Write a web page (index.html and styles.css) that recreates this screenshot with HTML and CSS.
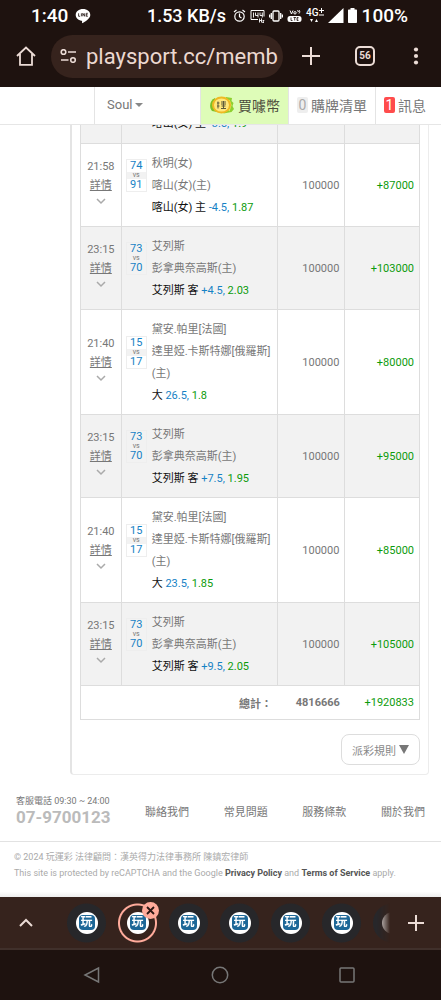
FILE: index.html
```
<!DOCTYPE html>
<html lang="zh-Hant">
<head>
    <meta charset="UTF-8">
    <meta name="viewport" content="width=device-width, initial-scale=1.0">
    <title>玩運彩</title>
    <link rel="stylesheet" href="styles.css">
</head>
<body>
    <div class="status-bar">
        <span class="clock">1:40</span>
        <svg class="line-icon" width="16" height="16" viewBox="0 0 16 16">
            <path d="M8 1C3.900 1 .7 3.600.7 6.900c0 2.900 2.500 5.300 5.900 5.800.7.1.6.6.4 2.200 0 .3.200.4.5.200 1.600-.9 7.800-4.400 7.800-8.200C15.300 3.600 12.100 1 8 1z" fill="#fff"/>
            <path d="M3.600 5.300v3h1.500M6.400 5.300v3M7.800 8.300v-3l1.900 3v-3M12.800 5.300h-1.500v3h1.500M11.300 6.800h1.300" fill="none" stroke="#1e120f" stroke-width=".8"/>
        </svg>
        <span class="speed">1.53 KB/s</span>
        <div class="status-icons">
            <svg width="13" height="14" viewBox="0 0 13 14" fill="none" stroke="#fff" stroke-width="1.200">
                <circle cx="6.500" cy="7.500" r="4.700"/><path d="M6.500 4.500v3.200l2 1.200M1 3l2.500-2M12 3L9.500 1"/>
            </svg>
            <svg width="15" height="14" viewBox="0 0 15 14" fill="none" stroke="#fff">
                <path d="M8 10.500H1v-9h13v6"/><path d="M3.500 3.500v5M5.500 3.500v3h2.500M8 3.500v5M10 3.500v3h2.500M12.300 3.500v5M9.500 9.500v4M9.500 11.500h2M11.500 9.500v4M12.500 11.500h1.500l-1.500 2h1.500" stroke-width=".9"/>
            </svg>
            <svg width="14" height="14" viewBox="0 0 14 14" fill="none" stroke="#fff" stroke-width="1.300">
                <rect x="4" y="2" width="6" height="10" rx="1"/><path d="M2.300 4v6M11.700 4v6M.6 5.500v3M13.400 5.500v3"/>
            </svg>
            <svg width="15" height="14" viewBox="0 0 15 14">
                <path d="M3 1.500l1.500 3.500L6 1.500M10 2c1-.8 2 .2 1 1.200M12 1c1 1 1 2.500 0 3.500" fill="none" stroke="#fff"/>
                <circle cx="8" cy="3.800" r="1.200" fill="none" stroke="#fff"/>
                <rect x=".5" y="7" width="14" height="6" rx="2.500" fill="#fff"/>
                <path d="M4 8.500v3h1.500M6.500 8.500h2.500M7.700 8.500v3M11.500 8.500H10v3h1.500M10 10h1.300" fill="none" stroke="#1e120f" stroke-width=".8"/>
            </svg>
            <span class="network">4G<svg width="5" height="9" viewBox="0 0 5 9" stroke="#fff"><path d="M0 2.500h5M2.500 0v5M0 7h5"/></svg><svg class="arrows" width="8" height="3" viewBox="0 0 8 3" fill="#fff"><path d="M0 0h3L1.500 3zM5 3h3L6.500 0z"/></svg></span>
            <svg width="16" height="15" viewBox="0 0 16 15" fill="#fff"><path d="M15.500 0v15H0z"/></svg>
            <svg class="battery" width="9" height="15" viewBox="0 0 9 15" fill="#fff"><path d="M2.500 0h4v1.500H8c.6 0 1 .4 1 1V14c0 .6-.4 1-1 1H1c-.6 0-1-.4-1-1V2.500c0-.6.4-1 1-1h1.500z"/></svg>
        </div>
        <span>100%</span>
    </div>

    <div class="browser-bar">
        <button class="icon-btn" aria-label="首頁">
            <svg width="20" height="20" viewBox="0 0 20 20" fill="none" stroke="#ecdcd6" stroke-width="1.800"><path d="M1 10L10 1.500 19 10M4 8v10.800h12V8"/></svg>
        </button>
        <div class="url-box">
            <svg width="17" height="14" viewBox="0 0 17 14" fill="none" stroke="#ecdcd6" stroke-width="1.600"><circle cx="3.500" cy="3" r="2.300"/><path d="M8 3h8M1 11h7.500"/><circle cx="13" cy="11" r="2.300"/></svg>
            <input type="text" aria-label="網址" value="playsport.cc/memb">
        </div>
        <button class="icon-btn" aria-label="新分頁">
            <svg width="18" height="18" viewBox="0 0 18 18" stroke="#ecdcd6" stroke-width="2"><path d="M9 0v18M0 9h18"/></svg>
        </button>
        <button class="tab-count">56</button>
        <button class="icon-btn" aria-label="選單">
            <svg width="6" height="18" viewBox="0 0 6 18" fill="#ecdcd6"><circle cx="3" cy="2.500" r="2.100"/><circle cx="3" cy="9" r="2.100"/><circle cx="3" cy="15.500" r="2.100"/></svg>
        </button>
    </div>

    <nav class="site-nav">
        <button class="user-menu">Soul <span class="caret"></span></button>
        <a class="buy" href="#">
            <svg width="26" height="20" viewBox="0 0 26 20">
                <path d="M6 3C1 5-.5 12 3 16l5 1z" fill="#7cc026"/>
                <path d="M17 2l6 1-.5 3 2 2-1 3 1.500 3-2.500 3-8 1.500z" fill="#8ed02f"/>
                <path d="M20 5l2 5-2 6" fill="none" stroke="#d9ef6a" stroke-width="1.200"/>
                <ellipse cx="12.500" cy="10" rx="9.500" ry="8.500" fill="#efb924"/>
                <ellipse cx="12.500" cy="10" rx="7.500" ry="6.600" fill="#ffe77d"/>
                <path d="M9 6.500v7M8 8h2.500M8 11h2.500M12 7h5M12 9h5M12.500 11h4M14.500 6v8M12 13.500h5" stroke="#5d5a3c" stroke-width="1" fill="none"/>
            </svg>
            買噱幣
        </a>
        <a href="#"><span class="badge">0</span>購牌清單</a>
        <a href="#"><span class="badge alert">1</span>訊息</a>
    </nav>

    <main class="page">
        <section class="panel">
            <table class="bets">
                <colgroup>
                    <col class="col-time"><col class="col-match"><col class="col-stake"><col class="col-win">
                </colgroup>
                <tbody>
                    <tr class="shade">
                        <td></td>
                        <td><div class="match"><div class="score blank"></div><div class="teams"><p class="pick">喀山(女) 主 <i>-3.5,</i> <b>1.9</b></p></div></div></td>
                        <td></td>
                        <td></td>
                    </tr>
                    <tr>
                        <td class="time">21:58<a href="#">詳情</a><svg width="10" height="10" viewBox="0 0 10 10"><path d="M1 3l4 4 4-4"/></svg></td>
                        <td><div class="match"><div class="score"><span>74</span><small>vs</small><span>91</span></div><div class="teams"><p>秋明(女)</p><p>喀山(女)(主)</p><p class="pick">喀山(女) 主 <i>-4.5,</i> <b>1.87</b></p></div></div></td>
                        <td class="num">100000</td>
                        <td class="num win">+87000</td>
                    </tr>
                    <tr class="shade">
                        <td class="time">23:15<a href="#">詳情</a><svg width="10" height="10" viewBox="0 0 10 10"><path d="M1 3l4 4 4-4"/></svg></td>
                        <td><div class="match"><div class="score"><span>73</span><small>vs</small><span>70</span></div><div class="teams"><p>艾列斯</p><p>彭拿典奈高斯(主)</p><p class="pick">艾列斯 客 <i>+4.5,</i> <b>2.03</b></p></div></div></td>
                        <td class="num">100000</td>
                        <td class="num win">+103000</td>
                    </tr>
                    <tr>
                        <td class="time">21:40<a href="#">詳情</a><svg width="10" height="10" viewBox="0 0 10 10"><path d="M1 3l4 4 4-4"/></svg></td>
                        <td><div class="match"><div class="score"><span>15</span><small>vs</small><span>17</span></div><div class="teams"><p>黛安.帕里[法國]</p><p>達里婭.卡斯特娜[俄羅斯](主)</p><p class="pick">大 <i>26.5,</i> <b>1.8</b></p></div></div></td>
                        <td class="num">100000</td>
                        <td class="num win">+80000</td>
                    </tr>
                    <tr class="shade">
                        <td class="time">23:15<a href="#">詳情</a><svg width="10" height="10" viewBox="0 0 10 10"><path d="M1 3l4 4 4-4"/></svg></td>
                        <td><div class="match"><div class="score"><span>73</span><small>vs</small><span>70</span></div><div class="teams"><p>艾列斯</p><p>彭拿典奈高斯(主)</p><p class="pick">艾列斯 客 <i>+7.5,</i> <b>1.95</b></p></div></div></td>
                        <td class="num">100000</td>
                        <td class="num win">+95000</td>
                    </tr>
                    <tr>
                        <td class="time">21:40<a href="#">詳情</a><svg width="10" height="10" viewBox="0 0 10 10"><path d="M1 3l4 4 4-4"/></svg></td>
                        <td><div class="match"><div class="score"><span>15</span><small>vs</small><span>17</span></div><div class="teams"><p>黛安.帕里[法國]</p><p>達里婭.卡斯特娜[俄羅斯](主)</p><p class="pick">大 <i>23.5,</i> <b>1.85</b></p></div></div></td>
                        <td class="num">100000</td>
                        <td class="num win">+85000</td>
                    </tr>
                    <tr class="shade">
                        <td class="time">23:15<a href="#">詳情</a><svg width="10" height="10" viewBox="0 0 10 10"><path d="M1 3l4 4 4-4"/></svg></td>
                        <td><div class="match"><div class="score"><span>73</span><small>vs</small><span>70</span></div><div class="teams"><p>艾列斯</p><p>彭拿典奈高斯(主)</p><p class="pick">艾列斯 客 <i>+9.5,</i> <b>2.05</b></p></div></div></td>
                        <td class="num">100000</td>
                        <td class="num win">+105000</td>
                    </tr>
                    <tr class="total">
                        <th colspan="2" scope="row">總計：</th>
                        <td class="num">4816666</td>
                        <td class="num win">+1920833</td>
                    </tr>
                </tbody>
            </table>
            <button class="rules">派彩規則 <svg width="10" height="9" viewBox="0 0 10 9"><path d="M0 0h10L5 9z" fill="#777"/></svg></button>
        </section>

        <footer class="footer">
            <div class="footer-links">
                <div class="service">
                    <span>客服電話 09:30 ~ 24:00</span>
                    <strong>07-9700123</strong>
                </div>
                <a href="#">聯絡我們</a>
                <a href="#">常見問題</a>
                <a href="#">服務條款</a>
                <a href="#">關於我們</a>
            </div>
            <div class="legal">
                <p>© 2024 玩運彩 法律顧問：漢英得力法律事務所 陳鎮宏律師</p>
                <p>This site is protected by reCAPTCHA and the Google <a href="#">Privacy Policy</a> and <a href="#">Terms of Service</a> apply.</p>
            </div>
        </footer>
    </main>

    <div class="tab-strip">
        <button class="icon-btn" aria-label="展開">
            <svg width="14" height="9" viewBox="0 0 14 9" fill="none" stroke="#ecdcd6" stroke-width="2"><path d="M1 8l6-6 6 6"/></svg>
        </button>
        <div class="tabs">
            <button class="tab"><span class="logo"><span>玩</span></span></button>
            <button class="tab active"><span class="logo"><span>玩</span></span>
                <svg class="close" width="17" height="17" viewBox="0 0 17 17"><circle cx="8.500" cy="8.500" r="8.500" fill="#ffab9b"/><path d="M5 5l7 7M12 5l-7 7" stroke="#2a1512" stroke-width="1.800"/></svg>
            </button>
            <button class="tab"><span class="logo"><span>玩</span></span></button>
            <button class="tab"><span class="logo"><span>玩</span></span></button>
            <button class="tab"><span class="logo"><span>玩</span></span></button>
            <button class="tab"><span class="logo"><span>玩</span></span></button>
            <button class="tab" aria-label="分頁"><span class="logo"></span></button>
        </div>
        <button class="icon-btn" aria-label="新增分頁">
            <svg width="16" height="16" viewBox="0 0 16 16" stroke="#ecdcd6" stroke-width="2"><path d="M8 0v16M0 8h16"/></svg>
        </button>
    </div>

    <div class="system-nav">
        <button class="icon-btn" aria-label="返回"><svg width="18" height="18" viewBox="0 0 18 18"><path d="M15.500 2v14L2 9z"/></svg></button>
        <button class="icon-btn" aria-label="主畫面"><svg width="18" height="18" viewBox="0 0 18 18"><circle cx="9" cy="9" r="7.700"/></svg></button>
        <button class="icon-btn" aria-label="最近使用"><svg width="18" height="18" viewBox="0 0 18 18"><rect x="2" y="2" width="14" height="14" rx="1"/></svg></button>
    </div>
</body>
</html>
```
FILE: styles.css
```
* {
    box-sizing: border-box;
}

body {
    display: flex;
    flex-direction: column;
    height: 100vh;
    margin: 0;
    background: #fff;
    color: #777;
    font-family: Roboto, "Noto Sans CJK TC", sans-serif;
    font-size: 11px;
}

button {
    margin: 0;
    padding: 0;
    border: none;
    background: none;
    color: inherit;
    font: inherit;
}

a {
    color: inherit;
    text-decoration: none;
}

p {
    margin: 0;
}

svg {
    display: block;
    flex: none;
}

.icon-btn {
    display: flex;
    align-items: center;
    justify-content: center;
}

/* phone status bar */
.status-bar {
    display: flex;
    align-items: center;
    height: 31px;
    padding: 0 33px 0 31px;
    background: #1e120f;
    color: #fff;
    font-size: 19px;
    font-weight: 500;
}

.line-icon {
    margin-left: 7px;
}

.speed {
    margin-left: auto;
    font-size: 18px;
}

.status-icons {
    display: flex;
    align-items: center;
    gap: 4px;
    margin: 0 5px 0 7px;
}

.network {
    position: relative;
    display: flex;
    height: 15px;
    font-size: 10px;
    line-height: 10px;
}

.network .arrows {
    position: absolute;
    left: 4px;
    bottom: 1px;
}

/* browser toolbar */
.browser-bar {
    display: flex;
    align-items: center;
    height: 56px;
    padding: 0 22px 6px 16px;
    background: #1e120f;
}

.url-box {
    display: flex;
    align-items: center;
    flex: 1;
    gap: 9px;
    min-width: 0;
    height: 43px;
    margin: 0 19px 0 15px;
    padding: 0 4px 0 9px;
    border-radius: 22px;
    background: #36231d;
}

.url-box input {
    flex: 1;
    min-width: 0;
    padding: 0;
    border: none;
    outline: none;
    background: none;
    color: #ecd8d0;
    font-family: Roboto, sans-serif;
    font-size: 22px;
}

.tab-count {
    flex: none;
    width: 20px;
    height: 20px;
    margin: 0 38px 0 35px;
    border: 2px solid #ecdcd6;
    border-radius: 5px;
    color: #ecdcd6;
    font-size: 10px;
    font-weight: 700;
    line-height: 16px;
}

/* site header */
.site-nav {
    display: flex;
    justify-content: flex-end;
    height: 38px;
    border-bottom: 1px solid #e6e6e6;
    color: #777;
    font-size: 14px;
}

.site-nav > * {
    display: flex;
    align-items: center;
    gap: 3px;
    padding: 0 8px 2px;
    border-left: 1px solid #e4e4e4;
}

.site-nav > :last-child {
    padding-right: 15px;
}

.site-nav .user-menu {
    width: 106px;
    padding-left: 12px;
    font-size: 13px;
}

.caret {
    border: 4px solid transparent;
    border-top-color: #888;
    border-bottom: none;
}

.site-nav .buy {
    background: #defcb8;
    color: #4c4c3c;
}

.badge {
    width: 11px;
    border-radius: 2px;
    background: #eee;
    color: #aaa;
    line-height: 16px;
    text-align: center;
}

.badge.alert {
    background: #ff4c4c;
    color: #fff;
}

/* the page is scrolled to its end */
.page {
    display: flex;
    flex: 1;
    flex-direction: column;
    justify-content: flex-end;
    min-height: 0;
    overflow: hidden;
}

.panel {
    display: flex;
    flex-direction: column;
    align-items: flex-end;
    margin: 0 12px 0 70px;
    padding: 0 8px 9px;
    border: 1px solid #ececec;
    border-left: 2px solid #e4e4e4;
    border-radius: 4px;
}

.bets {
    width: 100%;
    table-layout: fixed;
    border-collapse: collapse;
}

.col-time { width: 12%; }
.col-match { width: 46%; }
.col-stake { width: 20%; }
.col-win { width: 22%; }

.bets td,
.bets th {
    padding: 9px 5px 7px;
    border: 1px solid #ddd;
}

.shade {
    background: #f2f2f2;
}

.bets .time {
    padding: 0;
    line-height: 18px;
    text-align: center;
}

.time a {
    display: block;
    line-height: 20px;
    text-decoration: underline;
}

.time svg {
    margin: 0 auto 6px;
    fill: none;
    stroke: #aaa;
    stroke-width: 1.5;
}

.match {
    display: flex;
    align-items: center;
    gap: 5px;
    margin: 0 -5px 0 -1px;
}

.score {
    flex: none;
    width: 21px;
    margin-bottom: 22px;
    border: 1px solid #eee;
    color: #1682c5;
    text-align: center;
}

.score.blank {
    border-color: transparent;
}

.score span {
    display: block;
    line-height: 12px;
}

.score small {
    display: block;
    background: #f2f2f2;
    color: #777;
    font-size: 7px;
    line-height: 7px;
}

.teams {
    line-height: 22px;
}

.pick {
    color: #111;
}

.pick i {
    color: #1682c5;
    font-style: normal;
}

.pick b {
    color: #0c9b0c;
    font-weight: 400;
}

.bets .num {
    padding: 0 5px;
    text-align: right;
}

.bets .win {
    color: #0c9b0c;
}

.bets .total > * {
    height: 34px;
    padding: 0 5px;
    border-right: none;
    border-left: none;
    text-align: right;
}

.bets .total > :first-child {
    border-left: 1px solid #ddd;
}

.bets .total > :last-child {
    border-right: 1px solid #ddd;
}

.total .num:not(.win) {
    font-weight: 700;
}

.rules {
    display: flex;
    align-items: center;
    gap: 3px;
    height: 31px;
    margin-top: 14px;
    padding: 0 10px;
    border: 1px solid #ddd;
    border-radius: 8px;
    color: #888;
}

/* footer */
.footer-links {
    display: flex;
    align-items: center;
    justify-content: space-between;
    height: 67px;
    padding: 6px 16px 0;
    border-bottom: 1px solid #e2e2e2;
}

.service {
    font-size: 9px;
    line-height: 12px;
}

.service strong {
    display: block;
    color: #bbb;
    font-size: 17px;
    line-height: 20px;
}

.legal {
    height: 55px;
    padding: 7px 14px 0;
    background: linear-gradient(#fff 90%, #eee);
    color: #aaa;
    font-size: 9px;
    line-height: 16px;
}

.legal a {
    color: #555;
    font-weight: 700;
}

/* bottom tab strip */
.tab-strip {
    display: flex;
    align-items: center;
    justify-content: space-between;
    height: 53px;
    padding: 0 17px 0 19px;
    border-bottom: 2px solid #40302b;
    background: #36231d;
}

.tabs {
    display: flex;
    flex: 1;
    gap: 12px;
    margin: 0 18px 0 34px;
    overflow: hidden;
    mask-image: linear-gradient(to left, transparent, #000 14px);
}

.tab {
    position: relative;
    display: flex;
    flex: none;
    align-items: center;
    justify-content: center;
    width: 39px;
    height: 42px;
    background: radial-gradient(circle, #27272a 19px, transparent 20px);
}

.tab.active {
    background: radial-gradient(circle, transparent 17px, #ffab9b 18px, #ffab9b 19px, transparent 20px);
}

.logo {
    display: flex;
    align-items: center;
    justify-content: center;
    width: 22px;
    height: 22px;
    border-radius: 50%;
    background: #fff;
}

.logo span {
    width: 16px;
    height: 15px;
    border-radius: 4px;
    background: #1d6797;
    color: #fff;
    font-size: 12px;
    font-weight: 700;
    line-height: 15px;
}

.close {
    position: absolute;
    top: 0;
    right: -2px;
}

/* android navigation */
.system-nav {
    display: flex;
    align-items: center;
    justify-content: space-between;
    height: 50px;
    padding: 0 85px 0 83px;
    background: #1e120f;
}

.system-nav svg {
    fill: none;
    stroke: #777;
    stroke-width: 1.5;
}
```
